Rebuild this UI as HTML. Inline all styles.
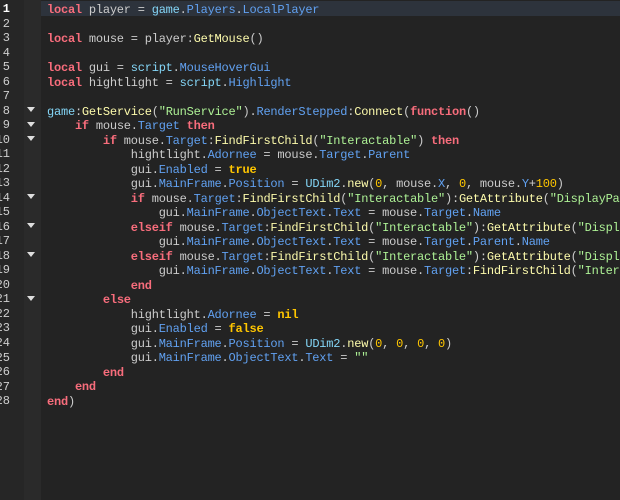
<!DOCTYPE html>
<html><head><meta charset="utf-8"><style>
html,body{margin:0;padding:0;width:620px;height:500px;overflow:hidden;background:#232323;position:relative}
.g{position:absolute;left:0;top:0;width:24px;height:500px;background:#262626}
.f{position:absolute;left:24px;top:0;width:17px;height:500px;background:#2a2a2a}
.hl{position:absolute;left:41px;top:1px;width:579px;height:15px;background:#2d333c}
.ln{position:absolute;left:-6px;width:16px;text-align:right;color:#cfcfcf;font:12px "Liberation Mono",monospace;margin-top:1px}
.ln.b{color:#fff;font-weight:bold}
.tri{position:absolute;left:27px;width:0;height:0;border-left:4px solid transparent;border-right:4px solid transparent;border-top:5px solid #ddd}
.code{position:absolute;left:47px;top:3px;width:573px;overflow:hidden;white-space:pre;font:12px/14.52px "Liberation Mono",monospace;letter-spacing:-0.22px;color:#cccccc}
.k{color:#f86d7c;font-weight:bold}.s{color:#adf195}.fn{color:#fdfbac}.p{color:#61a1f1}.gl{color:#84d6f7}.n{color:#ffc600}.c{color:#ffc600;font-weight:bold}
</style></head><body>
<div class="g"></div><div class="f"></div><div class="hl"></div>
<div class="code"><span class="k">local</span> player = <span class="gl">game</span>.<span class="p">Players</span>.<span class="p">LocalPlayer</span>

<span class="k">local</span> mouse = player:<span class="fn">GetMouse</span>()

<span class="k">local</span> gui = <span class="gl">script</span>.<span class="p">MouseHoverGui</span>
<span class="k">local</span> hightlight = <span class="gl">script</span>.<span class="p">Highlight</span>

<span class="gl">game</span>:<span class="fn">GetService</span>(<span class="s">"RunService"</span>).<span class="p">RenderStepped</span>:<span class="fn">Connect</span>(<span class="k">function</span>()
    <span class="k">if</span> mouse.<span class="p">Target</span> <span class="k">then</span>
        <span class="k">if</span> mouse.<span class="p">Target</span>:<span class="fn">FindFirstChild</span>(<span class="s">"Interactable"</span>) <span class="k">then</span>
            hightlight.<span class="p">Adornee</span> = mouse.<span class="p">Target</span>.<span class="p">Parent</span>
            gui.<span class="p">Enabled</span> = <span class="c">true</span>
            gui.<span class="p">MainFrame</span>.<span class="p">Position</span> = <span class="gl">UDim2</span>.<span class="fn">new</span>(<span class="n">0</span>, mouse.<span class="p">X</span>, <span class="n">0</span>, mouse.<span class="p">Y</span>+<span class="n">100</span>)
            <span class="k">if</span> mouse.<span class="p">Target</span>:<span class="fn">FindFirstChild</span>(<span class="s">"Interactable"</span>):<span class="fn">GetAttribute</span>(<span class="s">"DisplayParent"</span>)
                gui.<span class="p">MainFrame</span>.<span class="p">ObjectText</span>.<span class="p">Text</span> = mouse.<span class="p">Target</span>.<span class="p">Name</span>
            <span class="k">elseif</span> mouse.<span class="p">Target</span>:<span class="fn">FindFirstChild</span>(<span class="s">"Interactable"</span>):<span class="fn">GetAttribute</span>(<span class="s">"DisplayParent"</span>)
                gui.<span class="p">MainFrame</span>.<span class="p">ObjectText</span>.<span class="p">Text</span> = mouse.<span class="p">Target</span>.<span class="p">Parent</span>.<span class="p">Name</span>
            <span class="k">elseif</span> mouse.<span class="p">Target</span>:<span class="fn">FindFirstChild</span>(<span class="s">"Interactable"</span>):<span class="fn">GetAttribute</span>(<span class="s">"DisplayName"</span>)
                gui.<span class="p">MainFrame</span>.<span class="p">ObjectText</span>.<span class="p">Text</span> = mouse.<span class="p">Target</span>:<span class="fn">FindFirstChild</span>(<span class="s">"Interactable"</span>)
            <span class="k">end</span>
        <span class="k">else</span>
            hightlight.<span class="p">Adornee</span> = <span class="c">nil</span>
            gui.<span class="p">Enabled</span> = <span class="c">false</span>
            gui.<span class="p">MainFrame</span>.<span class="p">Position</span> = <span class="gl">UDim2</span>.<span class="fn">new</span>(<span class="n">0</span>, <span class="n">0</span>, <span class="n">0</span>, <span class="n">0</span>)
            gui.<span class="p">MainFrame</span>.<span class="p">ObjectText</span>.<span class="p">Text</span> = <span class="s">""</span>
        <span class="k">end</span>
    <span class="k">end</span>
<span class="k">end</span>)</div>
<div class="ln b" style="top:1px">1</div>
<div class="ln" style="top:15.5px">2</div>
<div class="ln" style="top:30px">3</div>
<div class="ln" style="top:44.6px">4</div>
<div class="ln" style="top:59.1px">5</div>
<div class="ln" style="top:73.6px">6</div>
<div class="ln" style="top:88.1px">7</div>
<div class="ln" style="top:102.6px">8</div>
<div class="ln" style="top:117.2px">9</div>
<div class="ln" style="top:131.7px">10</div>
<div class="ln" style="top:146.2px">11</div>
<div class="ln" style="top:160.7px">12</div>
<div class="ln" style="top:175.2px">13</div>
<div class="ln" style="top:189.8px">14</div>
<div class="ln" style="top:204.3px">15</div>
<div class="ln" style="top:218.8px">16</div>
<div class="ln" style="top:233.3px">17</div>
<div class="ln" style="top:247.8px">18</div>
<div class="ln" style="top:262.4px">19</div>
<div class="ln" style="top:276.9px">20</div>
<div class="ln" style="top:291.4px">21</div>
<div class="ln" style="top:305.9px">22</div>
<div class="ln" style="top:320.4px">23</div>
<div class="ln" style="top:335px">24</div>
<div class="ln" style="top:349.5px">25</div>
<div class="ln" style="top:364px">26</div>
<div class="ln" style="top:378.5px">27</div>
<div class="ln" style="top:393px">28</div>
<div class="tri" style="top:107px"></div>
<div class="tri" style="top:122px"></div>
<div class="tri" style="top:136px"></div>
<div class="tri" style="top:194px"></div>
<div class="tri" style="top:223px"></div>
<div class="tri" style="top:252px"></div>
<div class="tri" style="top:296px"></div>
</body></html>
